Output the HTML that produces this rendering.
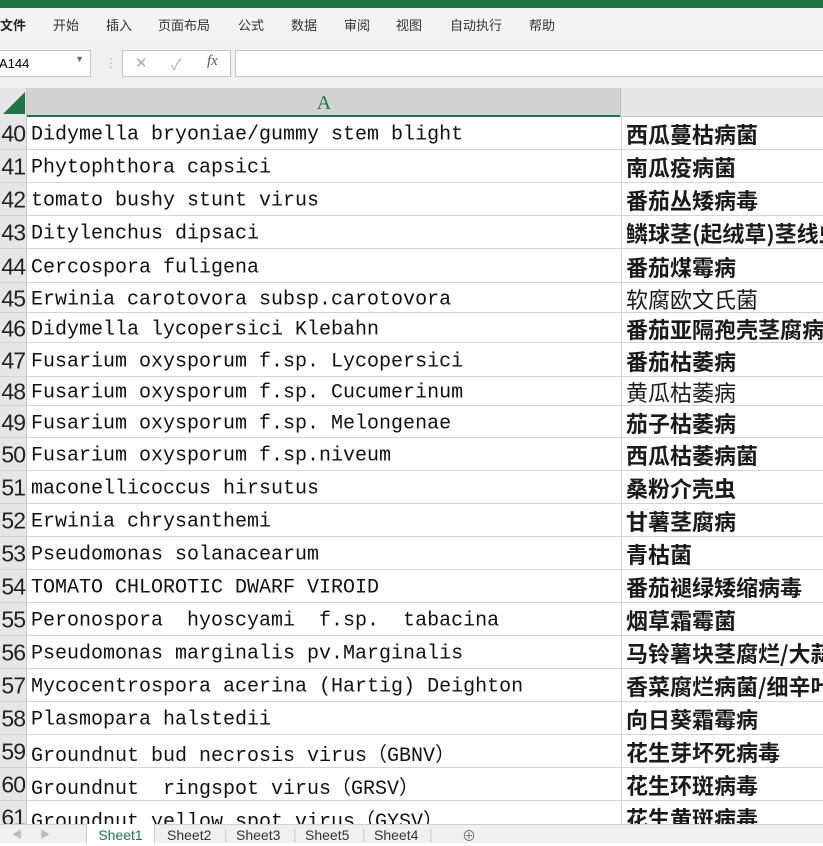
<!DOCTYPE html>
<html><head><meta charset="utf-8"><style>
*{margin:0;padding:0;box-sizing:border-box}
body{width:823px;height:843px;overflow:hidden;background:#fff;position:relative;font-family:"Liberation Sans","Noto Sans CJK SC",sans-serif}
.a{position:absolute}
.menu span{position:absolute;top:16px;font-size:13px;color:#333}
.row{position:absolute;left:0;width:823px;border-bottom:1px solid #d4d4d4}
.rh{position:absolute;left:0;top:0;bottom:0;width:27px;background:#e6e6e6;border-right:1px solid #c8c8c8;overflow:hidden}
.rh b{position:absolute;right:1px;font:23px "Liberation Sans",sans-serif;color:#222;font-weight:normal;top:calc(50% + 1px);transform:translateY(-50%);transform-origin:right;letter-spacing:-1px}
.ca{position:absolute;left:31px;top:calc(50% + 2px);transform:translateY(-50%);font:20px "Liberation Mono","Noto Sans CJK SC",monospace;color:#111;white-space:pre}
.cb{position:absolute;left:621px;top:0;bottom:0;border-left:1px solid #d4d4d4;width:210px;overflow:hidden}
.cb span{position:absolute;left:4px;top:calc(50% + 1px);transform:translateY(-50%);font:bold 22px "Noto Sans CJK SC",sans-serif;color:#1a1a1a;white-space:nowrap}
.cb span.n{font-weight:normal}
</style></head><body>
<div class="a" style="left:0;top:0;width:823px;height:8px;background:#217346"></div>
<div class="a menu" style="left:0;top:8px;width:823px;height:32px;background:#f3f3f3">
<span style="left:0;top:7px;font-weight:bold;color:#222">文件</span>
<span style="left:53px;top:7px">开始</span><span style="left:106px;top:7px">插入</span><span style="left:158px;top:7px">页面布局</span><span style="left:238px;top:7px">公式</span><span style="left:291px;top:7px">数据</span><span style="left:344px;top:7px">审阅</span><span style="left:396px;top:7px">视图</span><span style="left:450px;top:7px">自动执行</span><span style="left:529px;top:7px">帮助</span>
</div>
<div class="a" style="left:0;top:40px;width:823px;height:48px;background:#f0f0f0"></div>
<div class="a" style="left:-2px;top:50px;width:93px;height:27px;background:#fff;border:1px solid #c6c6c6;font-size:13px;padding:5px 0 0 0">A144<span style="position:absolute;right:6px;top:3px;font-size:9px;color:#666">▼</span></div>
<div class="a" style="left:105px;top:56px;color:#bbb;font-size:12px">⋮</div>
<div class="a" style="left:122px;top:50px;width:109px;height:27px;background:#fff;border:1px solid #c6c6c6;font-size:15px;color:#aaa"><span style="position:absolute;left:12px;top:3px">✕</span><span style="position:absolute;left:48px;top:3px">✓</span><span style="position:absolute;left:84px;top:2px;font-family:'Liberation Serif';font-style:italic;color:#555">fx</span></div>
<div class="a" style="left:235px;top:50px;width:600px;height:27px;background:#fff;border:1px solid #c6c6c6"></div>
<div class="a" style="left:0;top:88px;width:823px;height:29px;background:#e6e6e6;border-bottom:1px solid #c8c8c8"></div>
<div class="a" style="left:0;top:88px;width:27px;height:29px;background:#e6e6e6;border-right:1px solid #c8c8c8"></div>
<svg class="a" style="left:3px;top:92px" width="22" height="22"><polygon points="22,0 22,22 0,22" fill="#217346"/></svg>
<div class="a" style="left:27px;top:88px;width:594px;height:29px;background:#d2d2d2;border-bottom:2px solid #217346;text-align:center;font:20px 'Liberation Serif',serif;color:#217346;line-height:30px">A</div>
<div class="a" style="left:620px;top:88px;width:1px;height:29px;background:#b8b8b8"></div>

<div class="row" style="top:117px;height:33px"><div class="rh"><b>40</b></div><div class="ca">Didymella bryoniae/gummy stem blight</div><div class="cb"><span>西瓜蔓枯病菌</span></div></div>
<div class="row" style="top:150px;height:33px"><div class="rh"><b>41</b></div><div class="ca">Phytophthora capsici</div><div class="cb"><span>南瓜疫病菌</span></div></div>
<div class="row" style="top:183px;height:33px"><div class="rh"><b>42</b></div><div class="ca">tomato bushy stunt virus</div><div class="cb"><span>番茄丛矮病毒</span></div></div>
<div class="row" style="top:216px;height:33px"><div class="rh"><b>43</b></div><div class="ca">Ditylenchus dipsaci</div><div class="cb"><span>鳞球茎(起绒草)茎线虫</span></div></div>
<div class="row" style="top:249px;height:34px"><div class="rh"><b>44</b></div><div class="ca">Cercospora fuligena</div><div class="cb"><span>番茄煤霉病</span></div></div>
<div class="row" style="top:283px;height:30px"><div class="rh"><b>45</b></div><div class="ca">Erwinia carotovora subsp.carotovora</div><div class="cb"><span class="n">软腐欧文氏菌</span></div></div>
<div class="row" style="top:313px;height:30px"><div class="rh"><b>46</b></div><div class="ca">Didymella lycopersici Klebahn</div><div class="cb"><span>番茄亚隔孢壳茎腐病</span></div></div>
<div class="row" style="top:343px;height:34px"><div class="rh"><b>47</b></div><div class="ca">Fusarium oxysporum f.sp. Lycopersici</div><div class="cb"><span>番茄枯萎病</span></div></div>
<div class="row" style="top:377px;height:29px"><div class="rh"><b>48</b></div><div class="ca">Fusarium oxysporum f.sp. Cucumerinum</div><div class="cb"><span class="n">黄瓜枯萎病</span></div></div>
<div class="row" style="top:406px;height:32px"><div class="rh"><b>49</b></div><div class="ca">Fusarium oxysporum f.sp. Melongenae</div><div class="cb"><span>茄子枯萎病</span></div></div>
<div class="row" style="top:438px;height:33px"><div class="rh"><b>50</b></div><div class="ca">Fusarium oxysporum f.sp.niveum</div><div class="cb"><span>西瓜枯萎病菌</span></div></div>
<div class="row" style="top:471px;height:33px"><div class="rh"><b>51</b></div><div class="ca">maconellicoccus hirsutus</div><div class="cb"><span>桑粉介壳虫</span></div></div>
<div class="row" style="top:504px;height:33px"><div class="rh"><b>52</b></div><div class="ca">Erwinia chrysanthemi</div><div class="cb"><span>甘薯茎腐病</span></div></div>
<div class="row" style="top:537px;height:33px"><div class="rh"><b>53</b></div><div class="ca">Pseudomonas solanacearum</div><div class="cb"><span>青枯菌</span></div></div>
<div class="row" style="top:570px;height:33px"><div class="rh"><b>54</b></div><div class="ca">TOMATO CHLOROTIC DWARF VIROID</div><div class="cb"><span>番茄褪绿矮缩病毒</span></div></div>
<div class="row" style="top:603px;height:33px"><div class="rh"><b>55</b></div><div class="ca">Peronospora  hyoscyami  f.sp.  tabacina</div><div class="cb"><span>烟草霜霉菌</span></div></div>
<div class="row" style="top:636px;height:33px"><div class="rh"><b>56</b></div><div class="ca">Pseudomonas marginalis pv.Marginalis</div><div class="cb"><span>马铃薯块茎腐烂/大蒜</span></div></div>
<div class="row" style="top:669px;height:33px"><div class="rh"><b>57</b></div><div class="ca">Mycocentrospora acerina (Hartig) Deighton</div><div class="cb"><span>香菜腐烂病菌/细辛叶</span></div></div>
<div class="row" style="top:702px;height:33px"><div class="rh"><b>58</b></div><div class="ca">Plasmopara halstedii</div><div class="cb"><span>向日葵霜霉病</span></div></div>
<div class="row" style="top:735px;height:33px"><div class="rh"><b>59</b></div><div class="ca">Groundnut bud necrosis virus（GBNV）</div><div class="cb"><span>花生芽坏死病毒</span></div></div>
<div class="row" style="top:768px;height:33px"><div class="rh"><b>60</b></div><div class="ca">Groundnut  ringspot virus（GRSV）</div><div class="cb"><span>花生环斑病毒</span></div></div>
<div class="row" style="top:801px;height:33px"><div class="rh"><b>61</b></div><div class="ca">Groundnut yellow spot virus（GYSV）</div><div class="cb"><span>花生黄斑病毒</span></div></div>

<div class="a" style="left:0;top:824px;width:823px;height:19px;background:#f0f0f0;border-top:1px solid #d0d0d0;font-size:14px;color:#333">
<span style="position:absolute;left:12px;top:1px;color:#bbb;font-size:10px">◀</span><span style="position:absolute;left:40px;top:1px;color:#bbb;font-size:10px">▶</span>
<div style="position:absolute;left:86px;top:-1px;width:69px;height:20px;background:#fff;border-left:1px solid #ccc;border-right:1px solid #ccc;color:#217346;text-align:center;line-height:22px">Sheet1</div>
<span style="position:absolute;left:167px;top:2px">Sheet2</span><span style="position:absolute;left:224px;top:1px;color:#ccc">|</span>
<span style="position:absolute;left:236px;top:2px">Sheet3</span><span style="position:absolute;left:293px;top:1px;color:#ccc">|</span>
<span style="position:absolute;left:305px;top:2px">Sheet5</span><span style="position:absolute;left:362px;top:1px;color:#ccc">|</span>
<span style="position:absolute;left:374px;top:2px">Sheet4</span><span style="position:absolute;left:429px;top:1px;color:#ccc">|</span>
<span style="position:absolute;left:462px;top:1px;color:#777">⊕</span>
</div>
</body></html>
